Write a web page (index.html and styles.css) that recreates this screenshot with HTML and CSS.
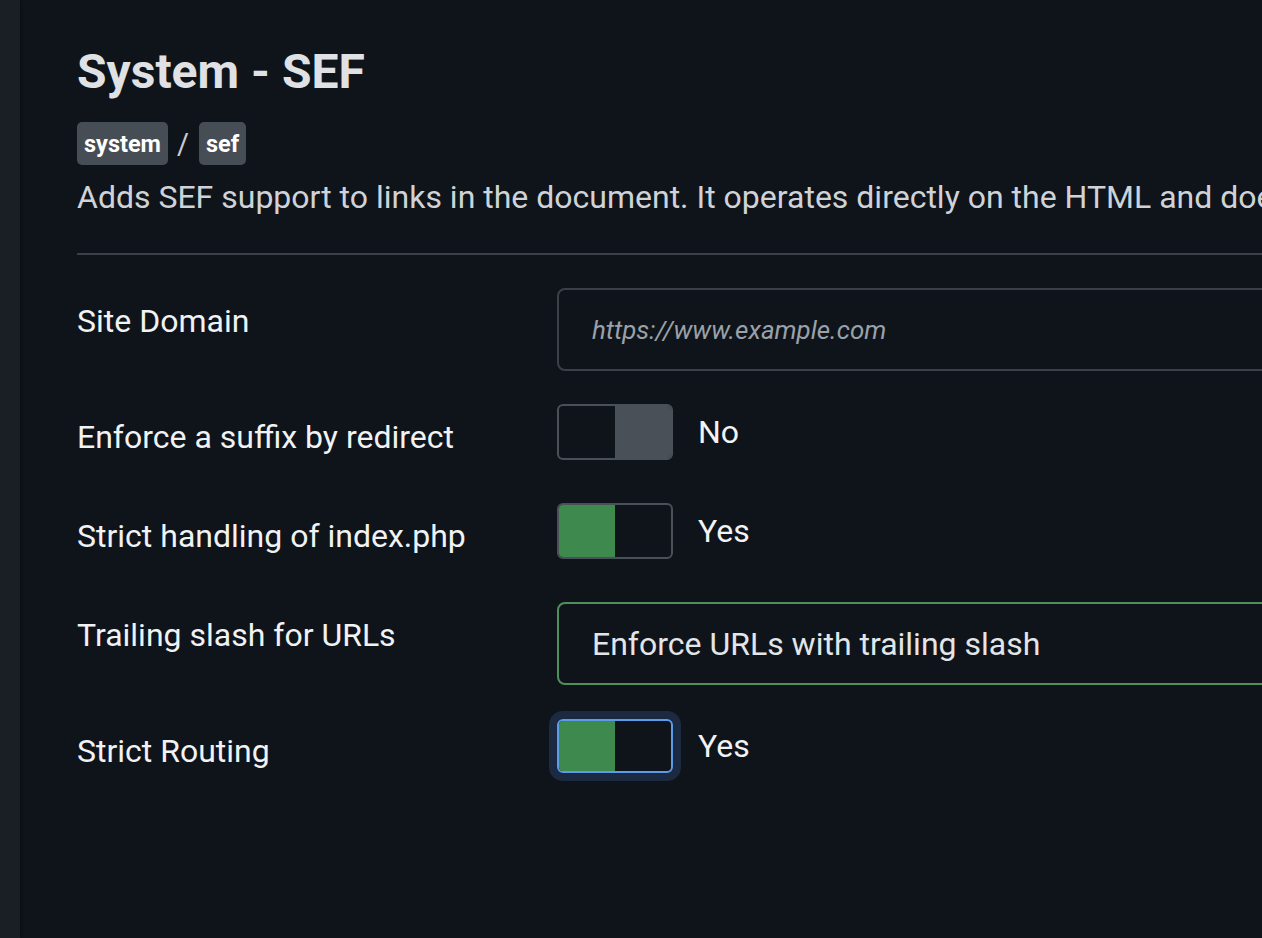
FILE: index.html
```html
<!DOCTYPE html>
<html lang="en">
<head>
<meta charset="utf-8">
<title>System - SEF</title>
<link rel="stylesheet" href="styles.css">
</head>
<body>
<div class="layout">
  <aside class="sidebar"></aside>
  <main class="content">
    <h1 class="title">System - SEF</h1>
    <div class="crumbs">
      <span class="badge">system</span>
      <span class="sep">/</span>
      <span class="badge">sef</span>
    </div>
    <p class="desc">Adds SEF support to links in the document. It operates directly on the HTML and does not require a special tag.</p>
    <hr class="divider">
    <div class="form">
      <div class="row">
        <label class="label">Site Domain</label>
        <div class="control">
          <div class="input"><span class="placeholder">https://www.example.com</span></div>
        </div>
      </div>
      <div class="row">
        <label class="label">Enforce a suffix by redirect</label>
        <div class="control switch-wrap">
          <span class="switch off"><span class="half"></span><span class="half knob"></span></span>
          <span class="state">No</span>
        </div>
      </div>
      <div class="row">
        <label class="label">Strict handling of index.php</label>
        <div class="control switch-wrap">
          <span class="switch on"><span class="half knob"></span><span class="half"></span></span>
          <span class="state">Yes</span>
        </div>
      </div>
      <div class="row">
        <label class="label">Trailing slash for URLs</label>
        <div class="control">
          <div class="input select"><span class="value">Enforce URLs with trailing slash</span></div>
        </div>
      </div>
      <div class="row">
        <label class="label">Strict Routing</label>
        <div class="control switch-wrap">
          <span class="switch on focus"><span class="half knob"></span><span class="half"></span></span>
          <span class="state">Yes</span>
        </div>
      </div>
    </div>
  </main>
</div>
</body>
</html>
```

FILE: styles.css
```css
html, body {
  margin: 0;
  padding: 0;
  height: 100%;
  background: #0f141b;
  overflow: hidden;
}
body {
  font-family: Roboto, "Liberation Sans", Arial, sans-serif;
  color: #e6e8eb;
}
.layout {
  display: flex;
  height: 938px;
  overflow: hidden;
}
.sidebar {
  flex: 0 0 20px;
  background: #1a1f26;
  box-shadow: 1px 0 3px rgba(0,0,0,0.35);
}
.content {
  flex: 0 0 auto;
  width: 1400px;
  padding-left: 57px;
  padding-top: 40px;
  box-sizing: border-box;
}
.title {
  margin: 0;
  font-size: 48px;
  font-weight: 700;
  line-height: 64px;
  color: #dfe1e4;
}
.crumbs {
  display: flex;
  align-items: center;
  margin-top: 18px;
  height: 43px;
}
.badge {
  display: inline-flex;
  align-items: center;
  height: 43px;
  padding: 0 7px;
  border-radius: 5px;
  background: #474d55;
  color: #ffffff;
  font-weight: 700;
  font-size: 23.5px;
  box-sizing: border-box;
}
.sep {
  font-size: 29px;
  color: #c9cdd2;
  margin: 0 10px 0 9px;
}
.desc {
  margin: 12px 0 0 0;
  font-size: 32px;
  line-height: 40px;
  color: #cfd3d8;
  white-space: nowrap;
  overflow: hidden;
  width: 1185px;
}
.divider {
  margin: 36px 0 0 0;
  border: 0;
  height: 2px;
  background: #3a4048;
}
.form {
  padding-top: 33px;
}
.row {
  display: grid;
  grid-template-columns: 480px 1fr;
  align-items: start;
  margin-bottom: 33px;
}
.label {
  font-size: 32px;
  line-height: 46px;
  padding: 10px 0;
  color: #f0f2f4;
}
.control {
  display: flex;
}
.input {
  width: 100%;
  height: 83px;
  box-sizing: border-box;
  border: 2px solid #3a4048;
  border-radius: 8px;
  display: flex;
  align-items: center;
  padding-left: 33px;
}
.placeholder {
  font-style: italic;
  font-size: 25.9px;
  color: #9ba1a8;
}
.select {
  border-color: #4f8f5c;
}
.value {
  font-size: 32px;
  color: #e3e6e9;
}
.switch-wrap {
  align-items: center;
  height: 56px;
}
.switch {
  display: flex;
  width: 116px;
  height: 56px;
  box-sizing: border-box;
  border: 2px solid #4a5058;
  border-radius: 6px;
  overflow: hidden;
}
.half {
  flex: 1 1 50%;
}
.switch.off .knob {
  background: #4a5058;
}
.switch.on .knob {
  background: #3e8a4e;
}
.switch.focus {
  border-color: #5b9bea;
  height: 54px;
  box-shadow: 0 0 0 8px #1b2a40;
}
.state {
  margin-left: 25px;
  font-size: 32px;
  color: #f2f3f5;
}
```
